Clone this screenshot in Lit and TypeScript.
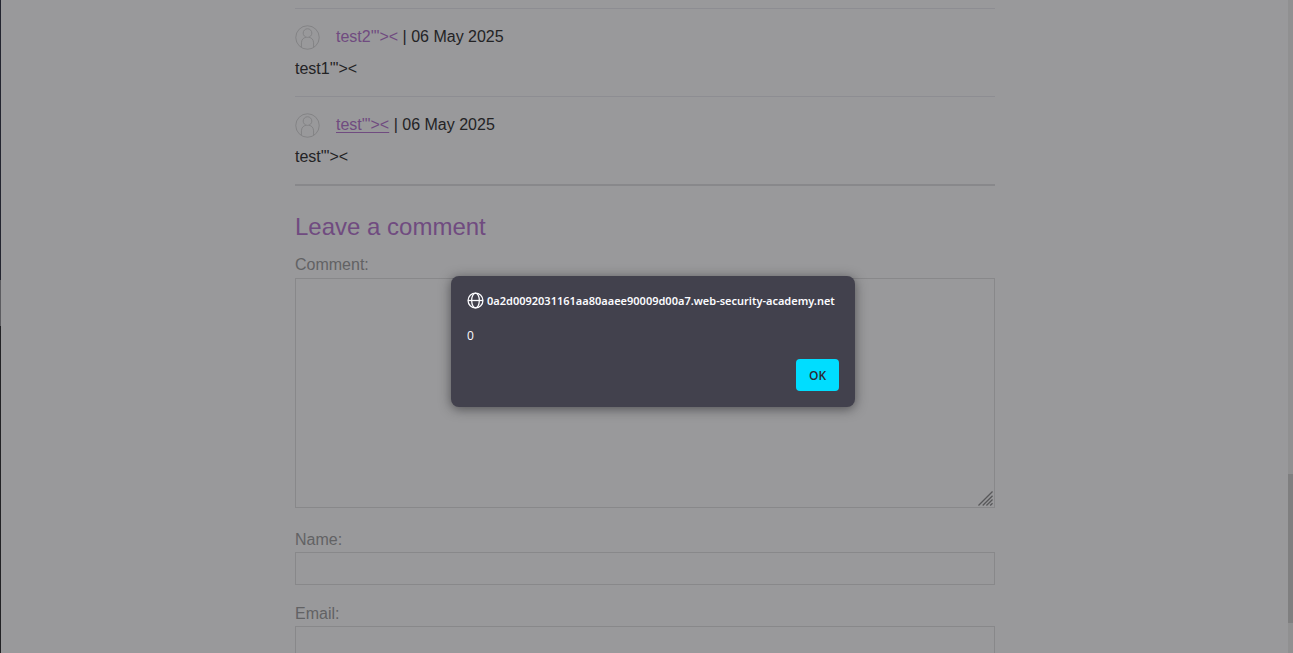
import { LitElement, html, css, svg } from "lit";
import { customElement, property } from "lit/decorators.js";

@customElement("blog-comment")
class BlogComment extends LitElement {
  @property() author = "";
  @property() date = "";
  @property() text = "";
  @property({ type: Boolean }) active = false;

  static styles = css`
    :host { display: block; }
    .comment { border-top: 1px solid #8d8d92; padding: 12px 0 11px; }
    .meta { display: flex; align-items: center; margin: 0; line-height: 32px; }
    .avatar { width: 25px; height: 25px; margin: 1px 16px 0 0; flex: none; }
    .author { color: #704b80; text-decoration: none; }
    .author.active { text-decoration: underline; text-underline-offset: 2px; }
    .date { white-space: pre; }
    .text { margin: 0; line-height: 32px; }
  `;

  render() {
    return html`<section class="comment">
      <p class="meta">
        <svg class="avatar" viewBox="0 0 26 26" fill="none" stroke="#828284" aria-hidden="true">
          <circle cx="13" cy="13" r="12.2" />
          <circle cx="13" cy="8.4" r="4.5" />
          <path d="M6.7 23.4V18.5C6.7 15.2 8.8 13.2 11.4 12.8M14.6 12.8C17.2 13.2 19.3 15.2 19.3 18.5V23.4" />
        </svg>
        <a class="author ${this.active ? "active" : ""}" href="#">${this.author}</a>
        <span class="date"> | ${this.date}</span>
      </p>
      <p class="text">${this.text}</p>
    </section>`;
  }
}

const globe = svg`
  <circle cx="8" cy="8" r="7" />
  <ellipse cx="8" cy="8" rx="3.6" ry="7" />
  <path d="M1 8H15" />
`;

@customElement("app-root")
class AppRoot extends LitElement {
  static styles = css`
    :host { display: block; font-family: "Liberation Sans", Arial, sans-serif; font-size: 16px; color: #232325; }
    * { box-sizing: border-box; }
    .window { position: relative; display: flex; height: 100vh; overflow: hidden; background: #99999b; }
    .edge { flex: none; width: 1px; background: linear-gradient(#232530 0 280px, #5c5c60 280px 326px, #222225 326px); }
    .page { flex: 1; min-width: 0; padding: 8px 0 0 1px; }
    .column { max-width: 700px; margin: 0 auto; }
    .scrollbar { flex: none; width: 5px; padding-top: 474px; background: #909091; }
    .thumb { height: 149px; background: #7f7f80; }
    .rule { margin: 0; border: 0; height: 2px; background: #88888b; }
    .heading { margin: 24px 0 9px; font-size: 24px; line-height: 34px; font-weight: 400; color: #704b80; }
    .label { display: block; line-height: 24px; color: #626264; }
    .field { display: block; width: 100%; border: 1px solid #88888a; border-radius: 0; background: transparent; font: inherit; color: inherit; padding: 4px 8px; outline: 0; }
    .area { position: relative; margin: 1px 0 20px; }
    .area .field { height: 230px; resize: none; }
    .grip { position: absolute; right: 2px; bottom: 2px; width: 15px; height: 15px; }
    .line { height: 33px; margin: 0 0 17px; }
    .layer { position: absolute; inset: 0; display: flex; align-items: center; justify-content: center; padding: 30px 0 0 13px; }
    .dialog { position: static; margin: 0; min-width: 404px; padding: 16px; border: 0; border-radius: 8px; background: #42414d; color: #fbfbfe; font: 12px/16px "Open Sans", "Segoe UI", sans-serif; box-shadow: 0 2px 12px rgba(30, 30, 34, 0.6); }
    .site { display: flex; align-items: center; gap: 3px; margin: 0 0 19px; font: 600 11px/16px "Noto Sans", "Segoe UI", sans-serif; }
    .globe { width: 17px; height: 17px; flex: none; }
    .message { margin: 0 0 15px; }
    .actions { display: flex; justify-content: flex-end; }
    .ok { border: 0; border-radius: 4px; width: 43px; height: 32px; padding: 2px 0 0; background: #00ddff; color: #2b2a33; font: 600 12px/16px "Open Sans", "Segoe UI", sans-serif; }
  `;

  render() {
    return html`<div class="window">
      <div class="edge"></div>
      <main class="page">
        <div class="column">
          <blog-comment author="test2&#39;&quot;&gt;&lt;" date="06 May 2025" text="test1&#39;&quot;&gt;&lt;"></blog-comment>
          <blog-comment active author="test&#39;&quot;&gt;&lt;" date="06 May 2025" text="test&#39;&quot;&gt;&lt;"></blog-comment>
          <hr class="rule" />
          <form>
            <h2 class="heading">Leave a comment</h2>
            <label class="label" for="comment">Comment:</label>
            <div class="area">
              <textarea class="field" id="comment"></textarea>
              <svg class="grip" viewBox="0 0 16 16" stroke="#58585a" stroke-width="1.4" aria-hidden="true">
                <path d="M0.5 15.5L15.5 0.5M5 15.5L15.5 5M9 15.5L15.5 9M13 15.5L15.5 13" />
              </svg>
            </div>
            <label class="label" for="name">Name:</label>
            <input class="field line" id="name" type="text" />
            <label class="label" for="email">Email:</label>
            <input class="field line" id="email" type="email" />
          </form>
        </div>
      </main>
      <div class="scrollbar"><div class="thumb"></div></div>
      <div class="layer">
        <dialog class="dialog" open aria-labelledby="site">
          <h1 class="site" id="site">
            <svg class="globe" viewBox="0 0 16 16" fill="none" stroke="#fbfbfe" stroke-width="1.2" aria-hidden="true">${globe}</svg>
            <span>0a2d0092031161aa80aaee90009d00a7.web-security-academy.net</span>
          </h1>
          <p class="message">0</p>
          <div class="actions"><button class="ok" type="button">OK</button></div>
        </dialog>
      </div>
    </div>`;
  }
}
